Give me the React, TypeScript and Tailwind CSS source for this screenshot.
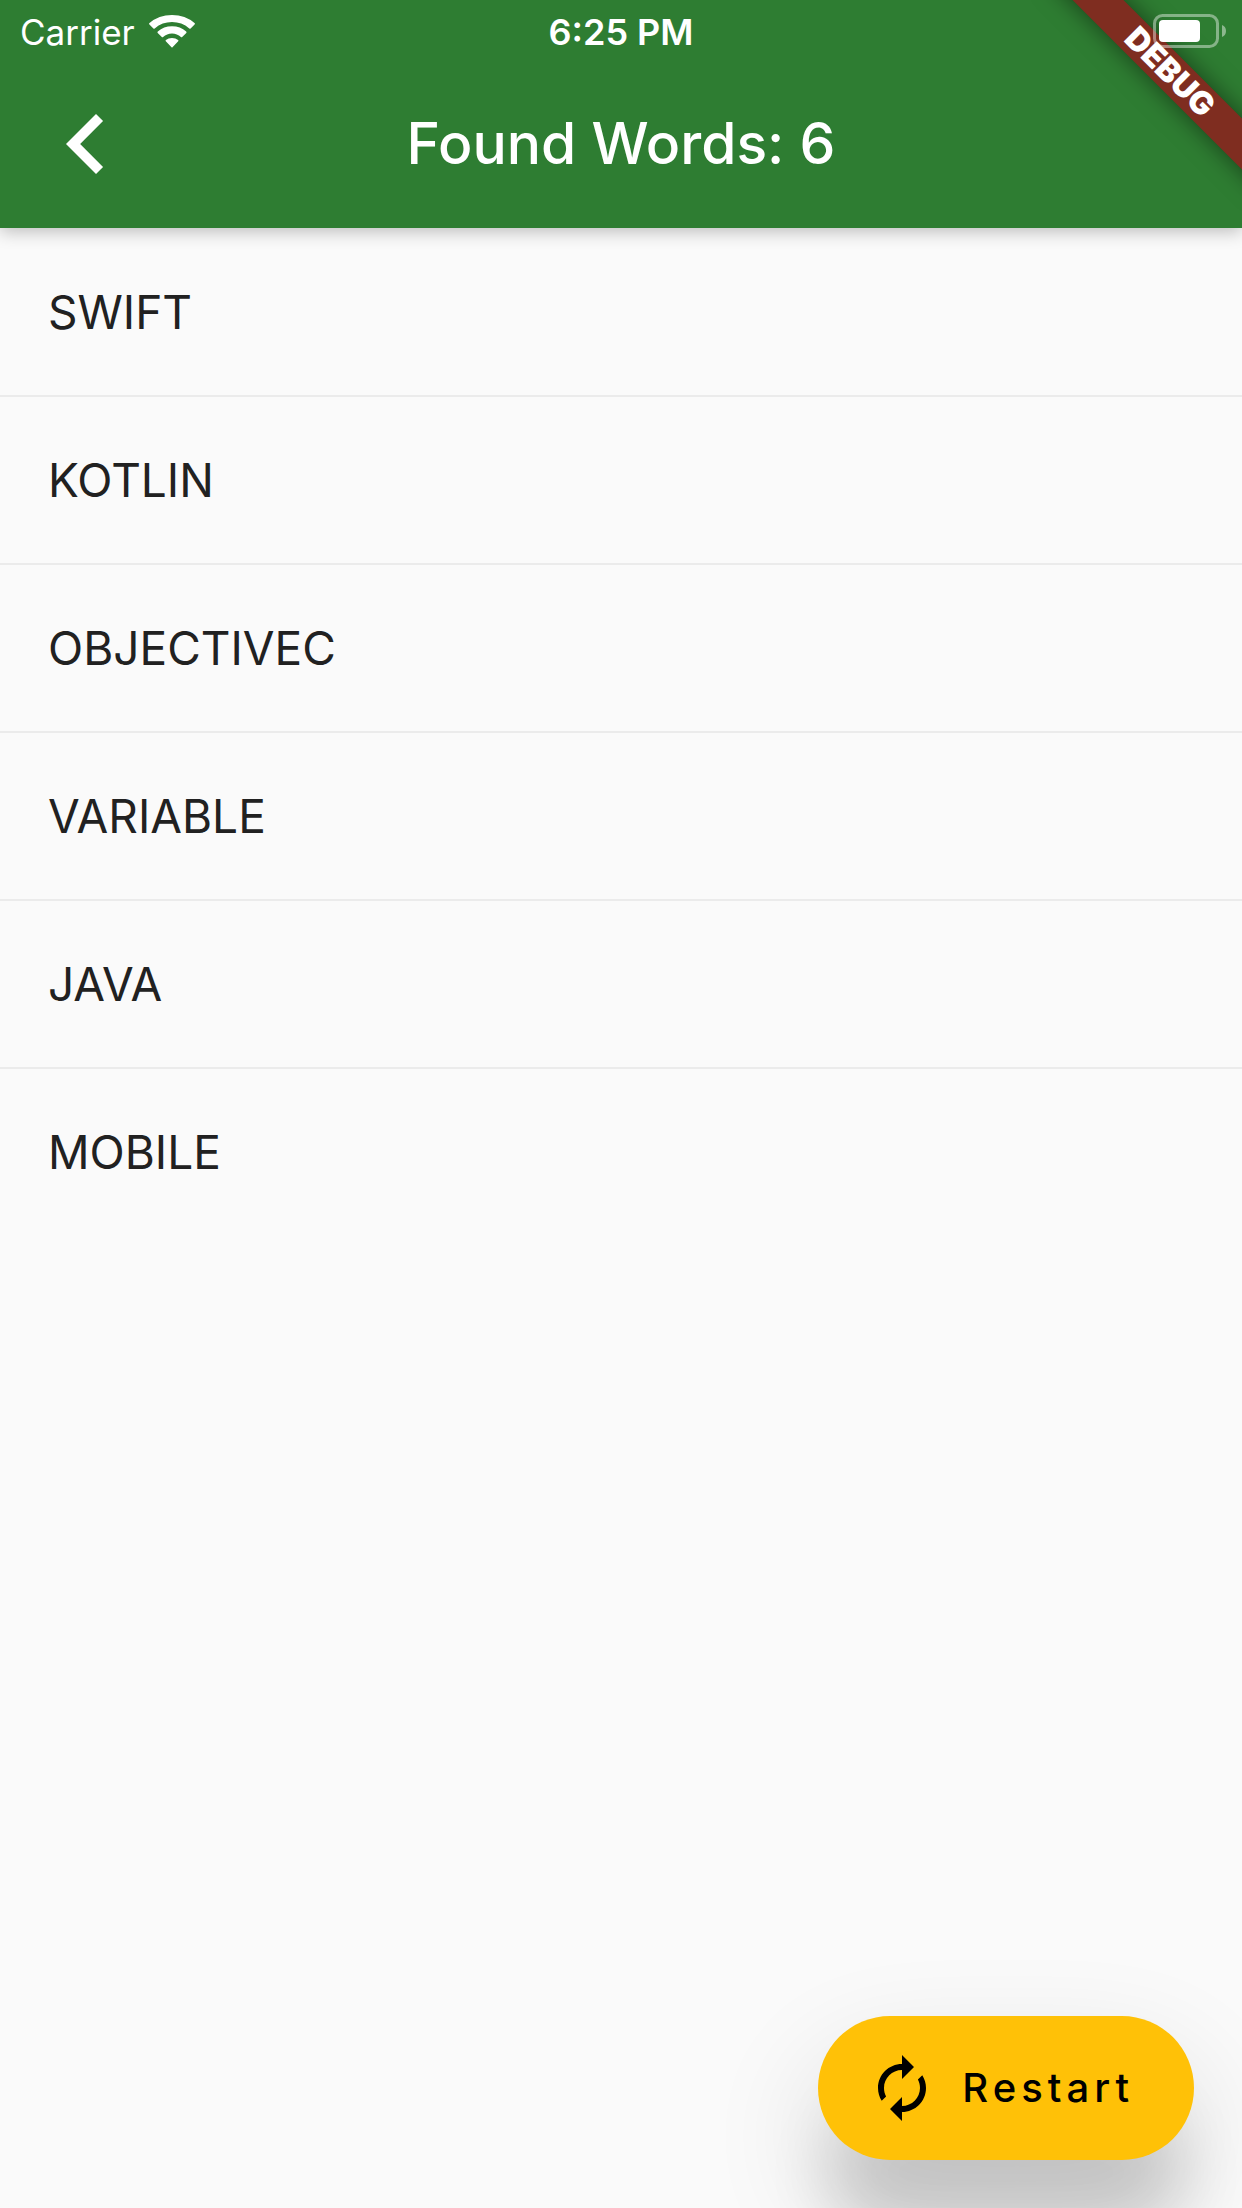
const words = ["SWIFT", "KOTLIN", "OBJECTIVEC", "VARIABLE", "JAVA", "MOBILE"];

function WifiIcon() {
  return (
    <svg viewBox="0 0 46 33" className="h-[33px] w-[46px]" fill="currentColor" aria-hidden="true">
      <path d="M0.4 9.4Q-0.3 8.8 0.5 8.1Q9.6 0 23 0Q36.4 0 45.5 8.1Q46.3 8.8 45.6 9.4L41.6 13.4Q41 14 40.3 13.4Q32.8 7 23 7Q13.2 7 5.7 13.4Q5 14 4.4 13.4Z" />
      <path d="M8.7 17.9Q8.1 17.3 8.8 16.6Q14.6 11.3 23 11.3Q31.4 11.3 37.2 16.6Q37.9 17.3 37.3 17.9L33.2 22Q32.6 22.6 31.9 22Q28.2 18.4 23 18.4Q17.8 18.4 14.1 22Q13.4 22.6 12.8 22Z" />
      <path d="M16.8 26.2Q16.2 25.6 16.9 25Q19.3 22.9 23 22.9Q26.7 22.9 29.1 25Q29.8 25.6 29.2 26.2L23.5 32.3Q23 32.8 22.5 32.3Z" />
    </svg>
  );
}

function BatteryIcon() {
  return (
    <svg viewBox="0 0 73 34" className="h-[34px] w-[73px]" aria-label="Battery" role="img">
      <rect x="1.5" y="1.5" width="63" height="31" rx="8" fill="none" stroke="#fff" strokeOpacity="0.42" strokeWidth="3" />
      <rect x="6" y="6" width="41" height="22" rx="4" fill="#fff" />
      <path d="M69 11Q73 12.5 73 17Q73 21.500 69 23Z" fill="#fff" fillOpacity="0.45" />
    </svg>
  );
}

function DebugBanner() {
  return (
    <div className="pointer-events-none absolute right-0 top-0 h-[216px] w-[216px] overflow-hidden">
      <div className="absolute -right-[78px] top-[54px] flex h-9 w-[300px] rotate-45 items-center justify-center bg-[#7f2d20] shadow-[0_0_24px_rgba(0,0,0,0.5)]">
        <span className="text-[32px] leading-9 font-black">DEBUG</span>
      </div>
    </div>
  );
}

export default function App() {
  return (
    <div className="relative flex min-h-screen flex-col bg-[#fafafa] font-['Inter',sans-serif] text-[#212121]">
      <header className="relative z-10 bg-[#2e7d32] text-white shadow-[0_4px_16px_rgba(0,0,0,0.24)]">
        <DebugBanner />
        <div className="relative grid h-[60px] grid-cols-3 items-center px-4">
          <div className="flex items-center gap-3.5 pl-1">
            <span className="pt-0.5 text-[35px] leading-[60px] font-normal">Carrier</span>
            <WifiIcon />
          </div>
          <time className="pt-0.5 text-center text-[36px] leading-[60px] font-semibold">6:25 PM</time>
          <div className="flex justify-end">
            <BatteryIcon />
          </div>
        </div>
        <div className="grid h-[168px] grid-cols-[1fr_auto_1fr] items-center px-[26px]">
          <button type="button" aria-label="Back" className="size-[120px]">
            <svg viewBox="0 0 24 24" className="size-full" fill="currentColor" aria-hidden="true">
              <path d="M15.41 7.41 14 6l-6 6 6 6 1.41-1.41L10.83 12z" />
            </svg>
          </button>
          <h1 className="text-[57px] leading-[72px] font-medium">Found Words: 6</h1>
        </div>
      </header>

      <main className="flex-1">
        <ul className="pt-px">
          {words.map((word) => (
            <li
              key={word}
              className="flex h-[168px] items-center border-b-2 border-[#ebebeb] px-12 text-[46px] leading-[60px] font-normal last:border-transparent"
            >
              {word}
            </li>
          ))}
        </ul>
      </main>

      <div className="pointer-events-none absolute inset-x-0 bottom-0 flex justify-end overflow-hidden p-12 pt-32">
        <button
          type="button"
          className="pointer-events-auto flex h-36 items-center gap-6 rounded-full bg-[#ffc107] pl-12 pr-15 text-black shadow-[0_84px_64px_-10px_rgba(0,0,0,0.14),0_48px_110px_10px_rgba(0,0,0,0.11)]"
        >
          <svg viewBox="0 0 24 24" className="size-[72px]" fill="currentColor" aria-hidden="true">
            <path d="M12 6v3l4-4-4-4v3c-4.42 0-8 3.58-8 8 0 1.570.46 3.030 1.240 4.260L6.700 14.800c-.45-.83-.7-1.790-.7-2.800 0-3.310 2.690-6 6-6zm6.760 1.740L17.300 9.200c.44.84.7 1.790.7 2.800 0 3.310-2.690 6-6 6v-3l-4 4 4 4v-3c4.420 0 8-3.580 8-8 0-1.570-.46-3.030-1.240-4.260z" />
          </svg>
          <span className="text-[40px] leading-[60px] font-medium tracking-[5px]">Restart</span>
        </button>
      </div>
    </div>
  );
}
